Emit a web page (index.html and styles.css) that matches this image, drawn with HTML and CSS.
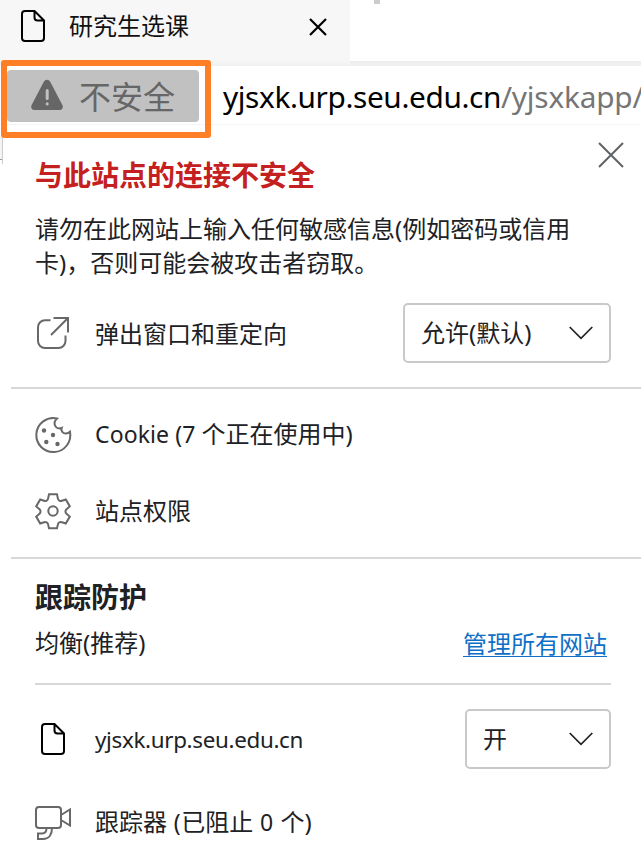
FILE: index.html
```html
<!DOCTYPE html>
<html lang="zh-CN">
<head>
<meta charset="utf-8">
<title>研究生选课</title>
<link rel="stylesheet" href="styles.css">
</head>
<body>
<header class="tabs">
  <div class="tab">
    <svg class="tab-icon" width="24" height="32" viewBox="0 0 24 32"><path d="M4 1h9.5L23 10.5V28a3 3 0 0 1-3 3H4a3 3 0 0 1-3-3V4a3 3 0 0 1 3-3zM13.5 1v6.5a3 3 0 0 0 3 3H23"/></svg>
    <span class="tab-title">研究生选课</span>
    <svg class="tab-close" width="16" height="16" viewBox="0 0 16 16"><path d="M0 0l16 16M16 0L0 16"/></svg>
  </div>
  <i class="tick"></i>
</header>
<div class="address">
  <div class="badge">
    <svg width="32" height="30" viewBox="0 0 32 30"><path fill="#666" d="M12.8 1.8a3.6 3.6 0 0 1 6.4 0l12.3 23.5A3.2 3.2 0 0 1 28.700 30H3.300a3.200 3.200 0 0 1-2.800-4.700z"/><path class="mark" d="M16.200 10.500v8M16.200 23.700v.2"/></svg>
    <span>不安全</span>
  </div>
  <div class="url">yjsxk.urp.seu.edu.cn<span>/yjsxkapp/</span></div>
  <div class="highlight"></div>
</div>
<main class="panel">
  <i class="edge"></i>
  <svg class="panel-close" width="26" height="26" viewBox="0 0 26 26"><path d="M1 1l24 24M25 1L1 25"/></svg>
  <h1>与此站点的连接不安全</h1>
  <p class="warning">请勿在此网站上输入任何敏感信息(例如密码或信用<br>卡)，否则可能会被攻击者窃取。</p>
  <div class="row popup">
    <span class="icon"><svg width="36" height="36" viewBox="0 0 36 36"><path d="M15.500 5.200H10a7 7 0 0 0-7 7V26a7 7 0 0 0 7 7h13.500a7 7 0 0 0 7-7v-5.500M18.500 3H33v14.500M33 3L16 20"/></svg></span>
    <span class="popup-label">弹出窗口和重定向</span>
    <div class="select wide"><span>允许(默认)</span><svg width="24" height="14" viewBox="0 0 24 14"><path d="M.7 1L12 12.300 23.300 1"/></svg></div>
  </div>
  <hr>
  <div class="row cookie">
    <span class="icon"><svg width="36" height="36" viewBox="0 0 36 36"><path d="M22 1.500A17 17 0 1 0 35 14.800C32.500 17.500 28.500 17 27 14.500c-.7-1.200-.7-2.500-.3-3.500C24 12 21 11 20 8.500c-1-2.500-.2-5 2-7z"/><g class="dots"><circle cx="9" cy="13.500" r="2.200"/><circle cx="18" cy="18" r="2.200"/><circle cx="11.300" cy="25" r="2.200"/><circle cx="22.500" cy="27" r="2.200"/></g></svg></span>
    <span class="cookie-label"><span class="label-latin">Cookie (7 </span>个正在使用中)</span>
  </div>
  <div class="row permission">
    <span class="icon"><svg width="36" height="36" viewBox="0 0 36 36"><path d="M14 1.300h8l.9 4.300c.4 1.800 2.200 2.800 4 2.200l3.900-1.300 4 6.900-3.300 2.800c-1.400 1.200-1.400 3.300 0 4.500l3.300 2.900-4 6.900-3.900-1.300c-1.800-.6-3.600.4-4 2.200l-.9 3.900h-8l-.9-3.900c-.4-1.800-2.200-2.800-4-2.200l-3.900 1.300-4-6.900 3.300-2.900c1.400-1.200 1.400-3.300 0-4.500l-3.300-2.800 4-6.900 3.900 1.300c1.800.6 3.600-.4 4-2.200z"/><circle cx="18" cy="18" r="4.700"/></svg></span>
    <span>站点权限</span>
  </div>
  <hr>
  <h2>跟踪防护</h2>
  <div class="level"><span>均衡(推荐)</span><a>管理所有网站</a></div>
  <hr class="inset">
  <div class="row site">
    <span class="icon"><svg class="doc" width="24" height="32" viewBox="0 0 24 32"><path d="M4 1h9.500L23 10.500V28a3 3 0 0 1-3 3H4a3 3 0 0 1-3-3V4a3 3 0 0 1 3-3zM13.500 1v6.500a3 3 0 0 0 3 3H23"/></svg></span>
    <span class="latin">yjsxk.urp.seu.edu.cn</span>
    <div class="select"><span>开</span><svg width="24" height="14" viewBox="0 0 24 14"><path d="M.7 1L12 12.300 23.300 1"/></svg></div>
  </div>
  <div class="row tracker">
    <span class="icon"><svg width="36" height="36" viewBox="0 0 36 36"><path d="M4 2h19a3 3 0 0 1 3 3v15a3 3 0 0 1-3 3H4a3 3 0 0 1-3-3V5a3 3 0 0 1 3-3zM26 10l9-5.500v16L26 15M11.500 23c0 3-1.500 5.500-4.500 5.500H3v5.500h5c6 0 9-4.500 9-11"/></svg></span>
    <span>跟踪器<span class="count"> (</span>已阻止<span class="count"> 0 </span>个)</span>
  </div>
</main>
</body>
</html>
```

FILE: styles.css
```css
* { box-sizing: border-box; }
body {
  margin: 0;
  width: 641px;
  height: 868px;
  overflow: hidden;
  background: #fff;
  color: #202124;
  font: 24px/34px "Noto Sans", "Noto Sans CJK SC", sans-serif;
}
svg { display: block; flex: none; overflow: visible; fill: none; stroke: #686868; stroke-width: 2; }
.tabs { display: flex; height: 66px; background: linear-gradient(#fff 61px, #ededed 61px, #f1f1f1); }
.tab { display: flex; width: 350px; height: 66px; padding: 10px 0 0 21px; background: linear-gradient(#f7f7f7 60px, #f0f0f0); color: #111; }
.tab svg { stroke: #000; }
.tab-title { width: 240px; margin: -1px 0 0 24px; }
.tab-close { margin: 9px 0 0 1px; stroke-width: 2.2; }
.tick { width: 6px; height: 4px; margin-left: 24px; background: #ccc; }
.address { position: relative; display: flex; height: 59px; padding: 4px 0 0 7px; border-bottom: 1px solid #f5f5f5; }
.badge { display: flex; flex: none; width: 192px; height: 52px; padding: 10px 0 0 24px; border-radius: 4px; background: #c1c1c1; color: #666; font-size: 32px; line-height: 33px; }
.badge span { margin-left: 16px; }
.badge svg { stroke: none; }
.badge .mark { stroke: #c1c1c1; stroke-width: 3; stroke-linecap: round; }
.url { margin-left: 24px; color: #000; font-size: 29.800px; line-height: 54px; letter-spacing: -.38px; white-space: nowrap; }
.url span { color: #767676; letter-spacing: -.2px; }
.highlight { position: absolute; left: 1px; top: -6px; width: 210px; height: 78px; border: 6px solid #ff7f27; border-radius: 3px; }
.panel { position: relative; }
.edge { position: absolute; left: 0; top: 13px; width: 3px; height: 26px; border-right: 1px solid #ccc; background: linear-gradient(#f4f4f4 21px, #999 21px, #999 22px, #fff 22px); }
.panel-close { position: absolute; left: 598px; top: 17px; stroke: #606366; }
h1, h2 { margin: 0 0 0 35px; font-size: 28px; font-weight: 700; }
h1 { padding-top: 33px; height: 87px; color: #c42020; }
.warning { margin: 0 0 0 35px; height: 91px; white-space: nowrap; }
.row { display: flex; align-items: center; padding: 0 30px 0 35px; white-space: nowrap; }
.icon { display: flex; justify-content: center; width: 36px; margin-right: 24px; }
.popup { height: 60px; }
.popup-label { padding-top: 2px; }
hr { height: 2px; margin: 0 0 0 11px; border: 0; background: #d8d8d8; }
.popup + hr { margin-top: 24px; }
.cookie { height: 76px; margin-top: 8px; }
.cookie-label { margin-top: -2px; }
.permission { height: 76px; margin-bottom: 8px; }
.dots { fill: #686868; stroke: none; }
h2 { padding-top: 21px; height: 67px; color: #202124; }
.level { display: flex; justify-content: space-between; height: 57px; padding: 0 34px 0 35px; }
.level a { margin-top: 1px; color: #0f70c7; text-decoration: underline; text-decoration-thickness: 1px; text-underline-offset: 3px; }
.inset { margin: 0 30px 0 35px; }
.select { display: flex; align-items: center; justify-content: space-between; width: 146px; height: 60px; margin-left: auto; padding: 0 16px; border: 2px solid #c9c9c9; border-radius: 5px; }
.select.wide { width: 208px; }
.select svg, .doc { stroke: #202124; }
.select svg { stroke-width: 1.700; }
.select > span { margin-top: -1px; }
.doc { stroke: #000; }
.site { height: 60px; margin-top: 24px; }
.tracker { height: 76px; margin-top: 16px; }
.tracker > span:last-child { margin-top: -2px; }
.latin { padding-top: 2px; font-size: 22.400px; letter-spacing: -.33px; white-space: pre; }
.label-latin { font-size: 23px; letter-spacing: .1px; white-space: pre; }
.count { font-size: 23px; letter-spacing: .7px; white-space: pre; }
```
